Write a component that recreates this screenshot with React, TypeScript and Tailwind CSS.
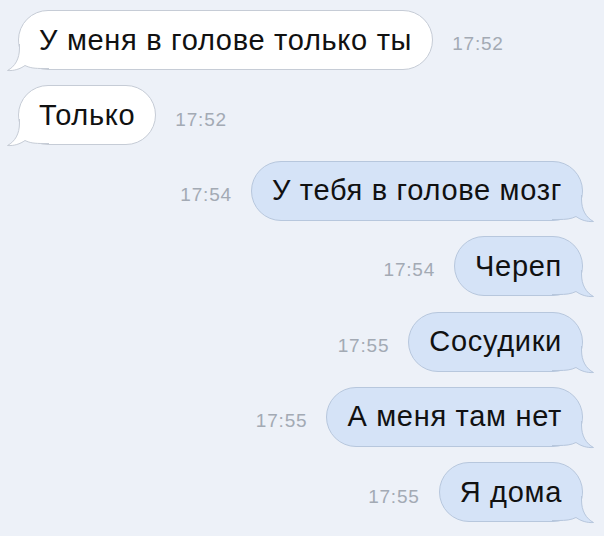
import React from "react";

type Msg = { text: string; time: string; out: boolean };

const messages: Msg[] = [
  { text: "У меня в голове только ты", time: "17:52", out: false },
  { text: "Только", time: "17:52", out: false },
  { text: "У тебя в голове мозг", time: "17:54", out: true },
  { text: "Череп", time: "17:54", out: true },
  { text: "Сосудики", time: "17:55", out: true },
  { text: "А меня там нет", time: "17:55", out: true },
  { text: "Я дома", time: "17:55", out: true },
];

function Tail({ out }: { out: boolean }) {
  const fill = out ? "#d5e3f7" : "#ffffff";
  const stroke = out ? "#b7c7dd" : "#c6ccd6";
  return (
    <svg
      width="44"
      height="34"
      viewBox="0 0 44 34"
      className={
        out
          ? "absolute -right-[14px] -bottom-[3px] -scale-x-100"
          : "absolute -left-[14px] -bottom-[3px]"
      }
    >
      <path
        d="M14.5 0 L14.5 10 C14.5 21 10 28.5 2.5 32.5 C9 33 15 31 20 27.5 C25 30 30 30.5 38 30.5 L44 30.5 L44 0 Z"
        fill={fill}
      />
      <path
        d="M14.5 6 L14.5 10 C14.5 21 10 28.5 2.5 32.5 C9 33 15 31 20 27.5 C25 30 30 30.5 38 30.5 L44 30.5"
        fill="none"
        stroke={stroke}
        strokeWidth="1"
      />
    </svg>
  );
}

function Bubble({ m }: { m: Msg }) {
  const time = (
    <span className="mt-[9px] text-[19px] tracking-[0.8px] text-[#a3aab4] [font-family:'Liberation_Sans',Arial,sans-serif]">
      {m.time}
    </span>
  );
  const bubble = (
    <div
      className={
        "relative flex h-[60px] items-center rounded-[30px] border px-5 " +
        (m.out
          ? "border-[#b7c7dd] bg-[#d5e3f7]"
          : "border-[#c6ccd6] bg-white")
      }
    >
      <Tail out={m.out} />
      <span className="relative text-[29px] leading-none tracking-[0.7px] text-[#111] [font-family:'Liberation_Sans',Arial,sans-serif]">
        {m.text}
      </span>
    </div>
  );
  return (
    <div
      className={
        "flex items-center gap-[19px] " +
        (m.out ? "justify-end pr-[21px]" : "justify-start pl-[18px]")
      }
    >
      {m.out ? (
        <>
          {time}
          {bubble}
        </>
      ) : (
        <>
          {bubble}
          {time}
        </>
      )}
    </div>
  );
}

export default function App() {
  return (
    <div className="h-[536px] w-[604px] overflow-hidden bg-[#edf1f8] pt-[10px]">
      <div className="flex flex-col gap-[15.4px]">
        {messages.map((m, i) => (
          <Bubble key={i} m={m} />
        ))}
      </div>
    </div>
  );
}
